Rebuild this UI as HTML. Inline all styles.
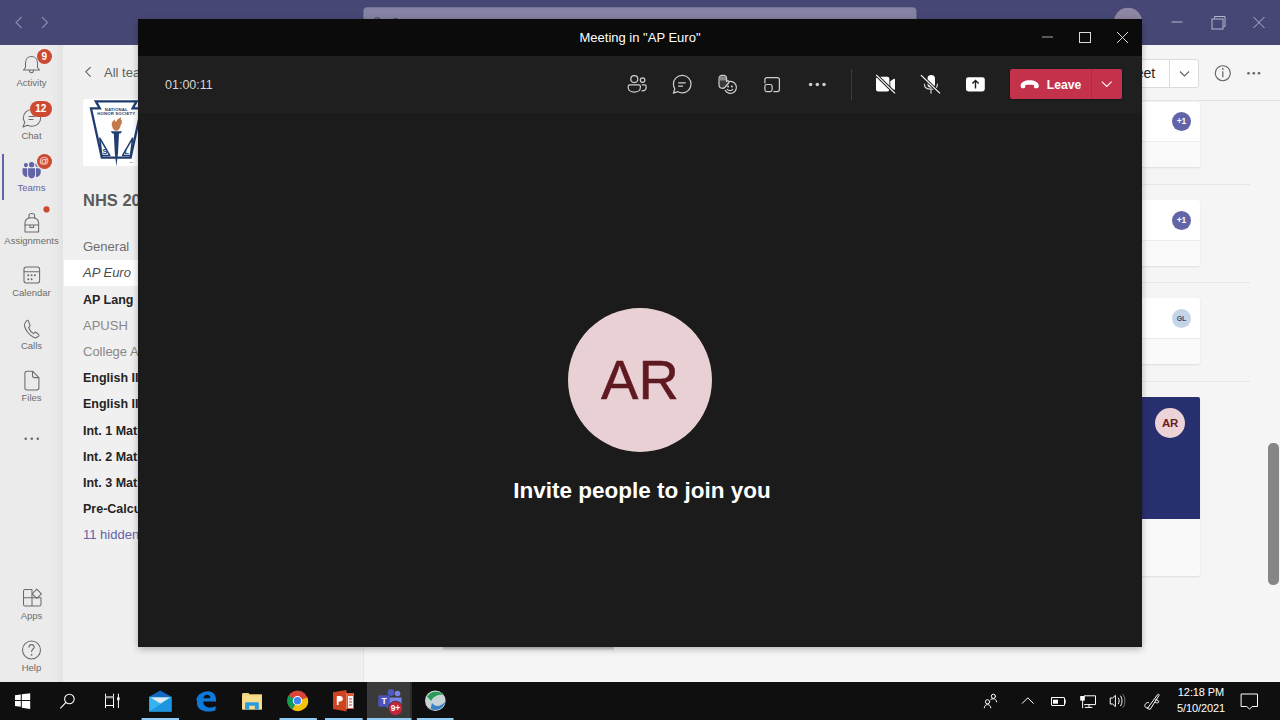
<!DOCTYPE html>
<html><head><meta charset="utf-8">
<style>
*{box-sizing:border-box;margin:0;padding:0}
html,body{width:1280px;height:720px;overflow:hidden;background:#f5f5f5;font-family:"Liberation Sans",sans-serif;position:relative}
.a{position:absolute}
svg{position:absolute;overflow:visible}
#topbar{left:0;top:0;width:1280px;height:45px;background:#464775}
#rail{left:0;top:45px;width:63px;height:637px;background:linear-gradient(to right,#ebebeb 0,#ebebeb 52px,#e3e3e3 63px)}
#chan{left:63px;top:45px;width:300px;height:637px;background:#f0f0f0}
#main{left:363px;top:45px;width:917px;height:637px;background:#f5f5f5}
#taskbar{left:0;top:682px;width:1280px;height:38px;background:#0f0f0f}
.rl{position:absolute;left:0;width:63px;text-align:center;font-size:9.5px;color:#6b6b6b;line-height:12px}
.ch{position:absolute;left:83px;font-size:13px;color:#616161;line-height:16px;white-space:nowrap}
.chb{font-weight:bold;color:#252424;font-size:12.5px}
.badge{position:absolute;border-radius:8px;background:#cc4a31;color:#fff;font-size:10px;font-weight:bold;text-align:center}
#mw{left:138px;top:19px;width:1004px;height:628px;background:#1b1b1b;box-shadow:0 2px 7px rgba(0,0,0,.28)}
.card{position:absolute;background:#fff;border-radius:3px;box-shadow:0 1px 2px rgba(0,0,0,.1)}
.cardf{position:absolute;background:#fafafa;border-top:1px solid #ececec;border-radius:0 0 3px 3px}
.av{position:absolute;width:19px;height:19px;border-radius:50%;font-size:8.5px;font-weight:bold;text-align:center;line-height:19px}
</style></head><body>
<div id="topbar" class="a"></div>
<svg width="1280" height="45" style="left:0;top:0">
  <g stroke="#8b8cb0" stroke-width="1.1" fill="none">
    <path d="M21.5 17 L16 22.5 L21.5 28"/><path d="M42 17 L47.5 22.5 L42 28"/>
  </g>
  <rect x="363.4" y="7.2" width="553" height="28" rx="4" fill="#8583a3"/>
  <circle cx="377.2" cy="22" r="4.3" stroke="#3d3c63" stroke-width="1" fill="none"/>
  <rect x="393.5" y="18" width="4" height="2" fill="#3d3c63" opacity="0.7"/>
  <circle cx="1128" cy="22" r="14.2" fill="#8e86a3"/>
  <g stroke="#b6b7cf" stroke-width="1" fill="none">
    <path d="M1171.5 22 H1182.5"/>
    <rect x="1212" y="19" width="11" height="10"/><path d="M1214.5 18.5 V16.5 H1225 V26.5 H1223.5"/>
    <path d="M1253.5 17 L1264.5 28 M1264.5 17 L1253.5 28"/>
  </g>
</svg>
<div id="main" class="a"></div>
<div class="a" style="left:363px;top:45px;width:1px;height:637px;background:#e6e6e6"></div>
<div class="a" style="left:363px;top:100px;width:917px;height:1px;background:#e3e3e3"></div>
<div class="a" style="left:1083px;top:58.5px;width:116px;height:29.5px;background:#fff;border:1px solid #dcdcdc;border-radius:3px"></div>
<div class="a" style="left:1168.5px;top:58.5px;width:1px;height:29.5px;background:#dcdcdc"></div>
<div class="a" style="left:1124px;top:65px;font-size:14px;color:#252424;line-height:16px">Meet</div>
<svg width="1280" height="120" style="left:0;top:0">
  <path d="M1180 71.5 L1184.5 76 L1189 71.5" stroke="#616161" stroke-width="1.1" fill="none"/>
  <circle cx="1222.8" cy="73.2" r="7.5" stroke="#616161" stroke-width="1.1" fill="none"/>
  <path d="M1222.8 71.2 V77.2" stroke="#616161" stroke-width="1.2"/><circle cx="1222.8" cy="68.9" r="0.9" fill="#616161"/>
  <circle cx="1248.5" cy="73.2" r="1.3" fill="#616161"/><circle cx="1253.8" cy="73.2" r="1.3" fill="#616161"/><circle cx="1259" cy="73.2" r="1.3" fill="#616161"/>
</svg>
<div class="a" style="left:700px;top:184px;width:550px;height:1px;background:#e6e6e6"></div>
<div class="a" style="left:700px;top:282px;width:550px;height:1px;background:#e6e6e6"></div>
<div class="a" style="left:700px;top:380.5px;width:550px;height:1px;background:#e6e6e6"></div>
<div class="card" style="left:443px;top:102px;width:757px;height:65px"></div>
<div class="cardf" style="left:443px;top:141px;width:757px;height:26px"></div>
<div class="card" style="left:443px;top:200px;width:757px;height:65.5px"></div>
<div class="cardf" style="left:443px;top:239.5px;width:757px;height:26px"></div>
<div class="card" style="left:443px;top:298px;width:757px;height:65.5px"></div>
<div class="cardf" style="left:443px;top:337.5px;width:757px;height:26px"></div>
<div class="card" style="left:443px;top:397px;width:757px;height:179px;overflow:hidden;background:#f9f9f9;border-radius:2px"><div class="a" style="left:0;top:0;width:757px;height:122px;background:#29306f"></div></div>
<div class="av" style="left:1172px;top:112.3px;background:#6264a7;color:#fff">+1</div>
<div class="av" style="left:1172px;top:210.5px;background:#6264a7;color:#fff">+1</div>
<div class="av" style="left:1172px;top:308.5px;background:#c5d5e8;color:#3b4a6b;font-size:7px">GL</div>
<div class="a" style="left:1155px;top:408px;width:30px;height:30px;border-radius:50%;background:#ecd3d6;color:#6a1c26;font-size:11.5px;font-weight:bold;text-align:center;line-height:30px;letter-spacing:-0.2px">AR</div>
<div class="a" style="left:1267.8px;top:443.3px;width:11.2px;height:142px;border-radius:5px;background:#868686"></div>
<div id="chan" class="a"></div>
<svg width="300" height="682" style="left:0;top:0">
  <path d="M90.3 67.3 L85.8 71.8 L90.3 76.3" stroke="#616161" stroke-width="1.1" fill="none" stroke-linecap="round"/>
</svg>
<div class="ch" style="left:104px;top:65px;font-size:13px;color:#616161">All teams</div>
<div class="a" style="left:83px;top:99px;width:70px;height:67px;background:#fff;border-radius:3px"></div>
<svg width="300" height="300" style="left:0;top:0">
  <path d="M95.8 101.4 H136.6 L132.6 108.4 H141.4 L130.6 157.6 H101.8 L91 108.4 H99.8 Z" fill="#fff" stroke="#1f3d70" stroke-width="2.3" stroke-linejoin="miter"/>
  <text x="116.2" y="110.8" font-size="4.3" font-weight="bold" fill="#1f3d70" text-anchor="middle" font-family="Liberation Sans" letter-spacing="0.15">NATIONAL</text>
  <text x="116.2" y="115.3" font-size="4.3" font-weight="bold" fill="#1f3d70" text-anchor="middle" font-family="Liberation Sans" letter-spacing="0.15">HONOR SOCIETY</text>
  <path d="M112.2 126.5 C111 123.5 112.5 120.8 115 119.2 C114.6 121.2 115.6 122 116.6 121.2 C117.2 119.2 119.2 117.6 121.6 117.2 C120.2 118.6 120.8 119.8 122 120.4 C121.4 121.2 121.6 122.4 122.2 123 C121.2 123.6 120.8 125 120.4 126.4 C119.6 129 118.2 130.6 116.2 130.8 C114.2 130.8 112.8 129 112.2 126.5 Z" fill="#c5794a"/>
  <path d="M110.8 131.2 H122 L120.6 133.6 H119 L118 153 L116.4 166.2 L114.8 153 L113.8 133.6 H112.2 Z" fill="#1f3d70"/>
  <path d="M99.8 138.2 L101.8 155.4 H109.8 Z" fill="none" stroke="#1f3d70" stroke-width="1.5" stroke-linejoin="round"/>
  <path d="M132.6 138.2 L130.6 155.4 H122.6 Z" fill="none" stroke="#1f3d70" stroke-width="1.5" stroke-linejoin="round"/>
  <text x="102.6" y="154.4" font-size="7.5" font-weight="bold" fill="#1f3d70" font-family="Liberation Sans">S</text>
  <text x="124.6" y="154.4" font-size="7.5" font-weight="bold" fill="#1f3d70" font-family="Liberation Sans">L</text>
  <text x="129.5" y="163" font-size="2.5" fill="#1f3d70" font-family="Liberation Sans">TM</text>
</svg>
<div class="ch chb" style="top:190px;font-size:16.5px;line-height:20px;color:#5b5b5b">NHS 2020-2021</div>
<div class="a" style="left:64px;top:260px;width:299px;height:26px;background:#fff"></div>
<div class="ch" style="top:239.2px;color:#6e6e6e">General</div>
<div class="ch" style="top:265.4px;font-style:italic;color:#4a4a4a">AP Euro</div>
<div class="ch chb" style="top:291.6px">AP Lang</div>
<div class="ch" style="top:317.8px;color:#8a8886">APUSH</div>
<div class="ch" style="top:344.0px;color:#8a8886">College Apps</div>
<div class="ch chb" style="top:370.2px">English III</div>
<div class="ch chb" style="top:396.4px">English III</div>
<div class="ch chb" style="top:422.6px">Int. 1 Math</div>
<div class="ch chb" style="top:448.8px">Int. 2 Math</div>
<div class="ch chb" style="top:475.0px">Int. 3 Math</div>
<div class="ch chb" style="top:501.2px">Pre-Calculus</div>
<div class="ch" style="top:527.4px;color:#6264a7">11 hidden teams</div>
<div id="rail" class="a">
  <div class="a" style="left:2px;top:109px;width:2px;height:46px;background:#6264a7"></div>
</div>
<svg width="63" height="682" style="left:0;top:0">
  <g stroke="#6b6b6b" stroke-width="1.05" fill="none" stroke-linecap="round" stroke-linejoin="round">
    <!-- bell -->
    <path d="M25.5 67.5 V63 C25.5 59 28 56.5 31.5 56.5 C35 56.5 37.5 59 37.5 63 V67.5 L39.5 70 H23.5 Z"/>
    <path d="M29.5 70.3 C29.5 72 30.5 72.8 31.5 72.8 C32.5 72.8 33.5 72 33.5 70.3"/>
    <!-- chat -->
    <path d="M23 127 L24.8 122.3 C23.8 120.8 23.3 119.5 23.3 118 C23.3 113 27.3 109.5 32 109.5 C36.8 109.5 40.7 113 40.7 118 C40.7 122.8 36.8 126.3 32 126.3 C30.3 126.3 28.8 126 27.5 125.3 Z"/>
    <path d="M29 116.5 H34.5 M29 119.5 H33"/>
    <!-- backpack -->
    <path d="M25 232 V223 C25 219.5 27.8 217.7 31.8 217.7 C35.8 217.7 38.6 219.5 38.6 223 V232 Z"/>
    <path d="M29 218 V215.5 C29 214.2 30 213.5 31.8 213.5 C33.6 213.5 34.6 214.2 34.6 215.5 V218"/>
    <path d="M25 225 H38.6 M30 225 V227.5 H33.6 V225"/>
    <!-- calendar -->
    <rect x="24" y="267" width="15.6" height="16" rx="2.2"/><path d="M24 271.8 H39.6"/>
    <!-- calls -->
    <path d="M26.8 320.5 C25 322.5 24 324 24.5 326 C25.5 330 29.5 335.5 34 337.5 C35.8 338.3 37.2 337.8 38.7 336.2 C39.2 335.6 39.1 334.8 38.5 334.3 L36.3 332.5 C35.8 332.1 35 332.1 34.5 332.6 L33.6 333.6 C31.3 332.3 29.5 330 28.5 327.5 L29.6 326.6 C30.1 326.1 30.2 325.3 29.8 324.8 L28.4 320.8 C28 320 27.3 320 26.8 320.5 Z"/>
    <!-- files -->
    <path d="M32.5 371.2 H27 C25.8 371.2 24.9 372.1 24.9 373.3 V387.8 C24.9 389 25.8 389.9 27 389.9 H36.8 C38 389.9 38.9 389 38.9 387.8 V377.6 Z M32.5 371.2 V375.5 C32.5 376.7 33.4 377.6 34.6 377.6 H38.9"/>
    <!-- apps -->
    <path d="M25.2 589.5 H32 V606 H25.2 C24.2 606 23.5 605.3 23.5 604.3 V591.2 C23.5 590.2 24.2 589.5 25.2 589.5 Z M23.5 597.8 H32 M32 597.8 H41 V604.3 C41 605.3 40.3 606 39.3 606 H32"/>
    <path d="M36.8 589.2 L41.4 593.8 L36.8 598.4 L32.2 593.8 Z"/>
    <!-- help -->
    <circle cx="31.5" cy="650" r="9"/>
    <path d="M29 647.2 C29 645.6 30.1 644.6 31.6 644.6 C33.1 644.6 34.2 645.6 34.2 647 C34.2 649 31.6 649.1 31.6 651.8"/>
  </g>
  <g fill="#6b6b6b">
    <circle cx="28.3" cy="275.2" r="1"/><circle cx="31.6" cy="275.2" r="1"/><circle cx="34.9" cy="275.2" r="1"/>
    <circle cx="28.3" cy="279.2" r="1"/><circle cx="31.6" cy="279.2" r="1"/>
    <circle cx="31.6" cy="654.8" r="0.9"/>
    <circle cx="25.7" cy="438.8" r="1.3"/><circle cx="31.8" cy="438.8" r="1.3"/><circle cx="37.8" cy="438.8" r="1.3"/>
  </g>
  <!-- teams icon -->
  <g fill="#6264a7">
    <circle cx="25.9" cy="165.1" r="2.1"/><circle cx="37.3" cy="165.1" r="2.1"/><circle cx="31.6" cy="164.7" r="2.6"/>
    <path d="M22.5 168.3 H27.2 V177 C24.6 177 22.5 175.2 22.5 172.5 Z"/>
    <path d="M36 168.3 H40.7 V172.5 C40.7 175.2 38.6 177 36 177 Z"/>
    <path d="M28.1 168.3 H35.1 V174.5 C35.1 176.7 33.6 178.4 31.6 178.4 C29.6 178.4 28.1 176.7 28.1 174.5 Z"/>
  </g>
  <circle cx="46.5" cy="209.4" r="3.1" fill="#cc4a31"/>
</svg>
<div class="rl" style="top:77px">Activity</div>
<div class="rl" style="top:129.5px">Chat</div>
<div class="rl" style="top:182px;color:#6264a7">Teams</div>
<div class="rl" style="top:234.5px">Assignments</div>
<div class="rl" style="top:287px">Calendar</div>
<div class="rl" style="top:339.5px">Calls</div>
<div class="rl" style="top:392px">Files</div>
<div class="rl" style="top:610px">Apps</div>
<div class="rl" style="top:662px">Help</div>
<div class="badge" style="left:37px;top:49.3px;width:14.8px;height:14.8px;line-height:15px">9</div>
<div class="badge" style="left:29.8px;top:101.1px;width:22px;height:15.6px;line-height:16px">12</div>
<div class="badge" style="left:36.6px;top:153.8px;width:15px;height:15px;line-height:14px;font-size:9.5px;font-weight:normal;box-shadow:0 0 0 1.2px #ebebeb">@</div>
<div id="taskbar" class="a"></div>
<div class="a" style="left:366.5px;top:682px;width:45px;height:38px;background:#3a3a3a"></div>
<div class="a" style="left:409.5px;top:682px;width:2px;height:36px;background:#2c2c2c"></div>
<div class="a" style="left:443px;top:647px;width:171px;height:4px;background:linear-gradient(rgba(0,0,0,.22),rgba(0,0,0,0))"></div>
<svg width="1280" height="720" style="left:0;top:0">
  <g fill="#fff">
    <path d="M15 695.2 L20.8 694.4 V700 H15 Z M21.8 694.3 L30.2 693.2 V700 H21.8 Z M15 701 H20.8 V706.7 L15 706 Z M21.8 701 H30.2 V708.9 L21.8 707.8 Z"/>
  </g>
  <g stroke="#fff" stroke-width="1.1" fill="none">
    <circle cx="69.4" cy="699" r="4.8"/><path d="M66 702.4 L60.3 708.3"/>
  </g>
  <g stroke="#fff" stroke-width="1" fill="none">
    <path d="M105.5 693.7 V708 M113.5 693.7 V708 M105.5 705.5 H113.5 M118.4 693.7 V708"/>
  </g>
  <rect x="105.5" y="696" width="8" height="2.3" fill="#9a9a9a"/>
  <ellipse cx="118.4" cy="698.8" rx="1.3" ry="2" fill="#fff"/>
  <!-- mail -->
  <path d="M149.1 696.8 L160.3 690.6 L171.5 696.8 Z" fill="#1167c4"/>
  <rect x="149.1" y="696.7" width="22.4" height="14.9" fill="#36b4f0"/>
  <path d="M171.5 697.5 V711.6 H149.1 Z" fill="#1e95e0"/>
  <path d="M150.8 697.6 H169.8 L160.3 703.4 Z" fill="#e6e9ee"/>
  <!-- edge -->
  <path d="M197 703.5 C197 696 201.5 691.2 208 691.2 C213.4 691.2 216 695.4 216 699.6 V701.6 H203.2 C203.2 705.4 206 707.6 209.6 707.6 C211.8 707.6 213.8 707 215.6 706 V710.2 C213.6 711.2 211.4 711.6 208.8 711.6 C202 711.6 197 708.4 197 703.5 Z M203.4 698.2 H210.4 C210.4 696 209 694.8 207 694.8 C205.2 694.8 203.8 696 203.4 698.2 Z" fill="#0f79d9"/>
  <path d="M196.8 700.6 C197.6 696.6 200.2 693.6 204.2 693" stroke="#0f79d9" stroke-width="1.6" fill="none"/>
  <!-- explorer -->
  <path d="M242.1 694.3 C242.1 693.6 242.6 693.1 243.3 693.1 H248.4 L249.6 694.2 H261.9 V709.4 H242.1 Z" fill="#f2cf6b"/>
  <path d="M242.1 695.2 H261.9 V709.4 H242.1 Z" fill="#f8dd8c"/>
  <path d="M243.2 693.9 H248.4" stroke="#bfe0c0" stroke-width="0.8"/>
  <path d="M245.1 709.4 V703.2 C245.1 702.7 245.5 702.3 246 702.3 H257.9 C258.4 702.3 258.8 702.7 258.8 703.2 V709.4 H254.8 V705.8 H249.2 V709.4 Z" fill="#2b9be2"/>
  <!-- chrome -->
  <circle cx="297.5" cy="700.7" r="10.3" fill="#db4437"/>
  <path d="M297.5 700.7 L288.6 695.5 A10.3 10.3 0 0 0 292.4 709.6 Z" fill="#0f9d58"/>
  <path d="M297.5 700.7 L292.4 709.6 A10.3 10.3 0 0 0 307.5 697.4 Z" fill="#f4c20d"/>
  <circle cx="297.5" cy="700.7" r="4.7" fill="#fff"/><circle cx="297.5" cy="700.7" r="3.7" fill="#4285f4"/>
  <!-- powerpoint -->
  <rect x="342" y="693" width="12" height="16" fill="#f3f3f3"/>
  <path d="M333 692.3 L346.5 690 V711.4 L333 709 Z" fill="#cf4420"/>
  <path d="M346.5 693 H354 V709 H346.5 Z" fill="#e05a34"/>
  <path d="M348 696 H353 V708 H348 Z" fill="#f7f7f7"/>
  <path d="M336.8 705 V696 H339.8 C341.8 696 342.8 697 342.8 698.8 C342.8 700.6 341.8 701.6 339.8 701.6 H338.6 V705 Z" fill="#fff"/>
  <path d="M349 699 H352 M349 702 H352 M349 705 H352" stroke="#cf4420" stroke-width="1"/>
  <!-- teams -->
  <circle cx="397.5" cy="693.5" r="2.8" fill="#7b83eb"/><circle cx="391" cy="692.6" r="3.3" fill="#5059c9"/>
  <path d="M386.5 697.5 H401.5 V704.5 C401.5 708 398.5 710.5 394 710.5 C389.5 710.5 386.5 708 386.5 704.5 Z" fill="#7b83eb"/>
  <rect x="378.3" y="695.2" width="11.5" height="11.5" rx="1" fill="#4b53bc"/>
  <text x="384" y="704.4" font-size="8.5" font-weight="bold" fill="#fff" text-anchor="middle" font-family="Liberation Sans">T</text>
  <circle cx="395.5" cy="708.4" r="7.2" fill="#c1273c" stroke="#3a3a3a" stroke-width="1"/>
  <text x="395.5" y="711.4" font-size="8.5" font-weight="bold" fill="#fff" text-anchor="middle" font-family="Liberation Sans">9+</text>
  <!-- globe app -->
  <circle cx="435.3" cy="700.7" r="10.3" fill="#c9d3d6"/>
  <path d="M427 697 C430 691 439 690 444 695 C440 694 434 695 431 701 C430 699.5 428.5 698 427 697 Z" fill="#2a9a58"/>
  <path d="M432 703 C436 708 441 706 445 702 C444 708 437 712 430.5 709 C431 707 431.5 705 432 703 Z" fill="#3b82c6"/>
  <g fill="#8ecbf5">
    <rect x="141.6" y="718" width="37.4" height="2"/><rect x="279.5" y="718" width="37.4" height="2"/>
    <rect x="325" y="718" width="37.7" height="2"/><rect x="367" y="718" width="44.4" height="2"/>
    <rect x="416.9" y="718" width="36.6" height="2"/>
  </g>
  <!-- tray -->
  <g stroke="#fff" stroke-width="1" fill="none" stroke-linecap="round">
    <circle cx="987.5" cy="701.8" r="2.1"/><path d="M984.3 707.8 C984.5 705.6 985.8 704.6 987.5 704.6 C989.2 704.6 990.6 705.6 990.8 707.8"/>
    <circle cx="993.4" cy="696.3" r="2.1"/><path d="M990.8 699.4 C991.4 699 992.3 698.8 993.4 698.8 C995.2 698.8 996.4 700 996.6 701.8"/>
    <path d="M1022 703.6 L1027.8 697.8 L1033.6 703.6" stroke-linecap="butt"/>
    <rect x="1051.5" y="697.5" width="13" height="8" rx="0.5"/><path d="M1065.2 699.8 V703.2"/>
    <path d="M1084.5 695.8 H1095.5 V704.6 H1084.5 M1082.6 700.5 V707.8 M1089 704.6 V707.4 M1085.2 707.4 H1092"/>
    <path d="M1110.6 698 H1112.6 L1115.4 695.4 V706.6 L1112.6 704 H1110.6 Z" stroke-linejoin="round"/>
    <path d="M1118.4 698 C1119.5 699.6 1119.5 702.2 1118.4 703.8 M1120.6 696 C1122.5 698.6 1122.5 703.2 1120.6 705.8"/>
    <path d="M1123 694.3 C1125.6 697.8 1125.6 704 1123 707.5" stroke="#777"/>
    <path d="M1148 707.5 C1145.5 708.8 1143.5 706 1145.8 703.5 C1146.6 702.7 1147.6 702.5 1148.4 702.6"/>
    <path d="M1147.6 708.2 L1157.6 694.6 C1158.2 693.8 1159.4 694.4 1159 695.4 L1150.4 709 Z" stroke-linejoin="round"/>
    <path d="M1155.4 700 C1157.6 699.6 1159.2 700.6 1158.6 702.2 C1158.2 703 1157 703 1155.6 702.6"/>
    <path d="M1241.5 694 H1257.5 V706.5 H1252.3 L1249.5 709 L1246.7 706.5 H1241.5 Z" stroke-linejoin="miter"/>
  </g>
  <rect x="1053" y="699.7" width="5" height="4" fill="#fff"/>
  <rect x="1080.2" y="696" width="4.6" height="4.6" fill="#fff"/>
</svg>
<div class="a" style="left:1170px;top:684.3px;width:62px;text-align:center;color:#fff;font-size:11px;line-height:16px;letter-spacing:-0.1px">12:18 PM<br>5/10/2021</div>
<div id="mw" class="a"></div>
<div class="a" style="left:138px;top:19px;width:1004px;height:36.5px;background:#0b0b0b"></div>
<div class="a" style="left:138px;top:55.5px;width:1004px;height:57px;background:#201f1f"></div>
<div class="a" style="left:138px;top:30px;width:1004px;text-align:center;color:#fff;font-size:13px;line-height:16px">Meeting in "AP Euro"</div>
<div class="a" style="left:165px;top:78px;color:#d6d6d6;font-size:12.5px;line-height:15px">01:00:11</div>
<div class="a" style="left:851px;top:69px;width:1px;height:31px;background:#3d3c3b"></div>
<svg width="1280" height="720" style="left:0;top:0">
  <g stroke="#dadada" stroke-width="1" fill="none">
    <path d="M1042 37 H1053" stroke="#a8a8a8"/>
    <rect x="1079.5" y="32.5" width="11" height="10"/>
    <path d="M1117 32 L1128 43 M1128 32 L1117 43"/>
  </g>
  <g stroke="#cfcfcf" stroke-width="1.2" fill="none" stroke-linecap="round" stroke-linejoin="round">
    <!-- people -->
    <circle cx="634.3" cy="79.1" r="3.5"/><circle cx="642.6" cy="80.1" r="2.3"/>
    <path d="M629.8 84.8 H638.8 C639.8 84.8 640.4 85.4 640.4 86.4 V87.2 C640.4 90.2 637.8 92.1 634.3 92.1 C630.8 92.1 628.2 90.2 628.2 87.2 V86.4 C628.2 85.4 628.8 84.8 629.8 84.8 Z"/>
    <path d="M642.2 84.8 H644.6 C645.6 84.8 646.2 85.4 646.2 86.4 V87.3 C646.2 89.5 644.6 90.9 642 90.9"/>
    <!-- chat -->
    <path d="M673.4 93.2 L674.8 88.8 C673.9 87.4 673.4 85.8 673.4 84.1 C673.4 79.2 677.3 75.3 682.2 75.3 C687.1 75.3 691 79.2 691 84.1 C691 89 687.1 92.9 682.2 92.9 C680.5 92.9 678.9 92.4 677.6 91.6 Z"/>
    <path d="M678.6 82.8 H685.4 M678.6 86.1 H682.6"/>
    <!-- smiley -->
    <path d="M728.4 81.7 A6 6 0 1 1 725.2 90.4"/>
    <path d="M727.2 89.4 C728.5 90.9 731.5 90.9 732.8 89.4"/>
    <!-- tray -->
    <path d="M764.9 83 V79.6 C764.9 78.4 765.9 77.6 767.1 77.6 H777.3 C778.5 77.6 779.4 78.4 779.4 79.6 V89.6 C779.4 90.9 778.5 91.6 777.3 91.6 H773.8"/>
    <rect x="764.9" y="84.5" width="7.2" height="7.1" rx="1.8"/>
  </g>
  <!-- hand -->
  <path d="M719 84.5 V78.8 C719 76.8 720.4 75.4 722.4 75.4 H723.4 C725.4 75.4 726.6 76.8 726.6 78.8 V81.6 L727.2 81.1 C727.9 80.6 728.8 80.9 729 81.6 C729.1 82.1 729 82.5 728.6 83 L725.2 87 C724.4 87.9 723.5 88.3 722.4 88.3 C720.4 88.3 719 86.7 719 84.5 Z" fill="#3a3a3a" stroke="#cfcfcf" stroke-width="1.2" stroke-linejoin="round"/>
  <path d="M719.6 76.5 H726 V80.5 H719.6 Z" fill="#8a8a8a"/>
  <g fill="#cfcfcf">
    <circle cx="728.1" cy="86.6" r="1"/><circle cx="731.9" cy="86.6" r="1"/>
    <circle cx="810.6" cy="84.4" r="1.75"/><circle cx="817.3" cy="84.4" r="1.75"/><circle cx="824" cy="84.4" r="1.75"/>
  </g>
  <g fill="#fff">
    <rect x="876" y="76.8" width="13.4" height="14.6" rx="2.2"/>
    <path d="M890.3 81.3 L893.6 78.9 C894.3 78.4 895 78.8 895 79.6 V88.9 C895 89.7 894.3 90.1 893.6 89.6 L890.3 87.3 Z"/>
    <rect x="966" y="77.2" width="18.8" height="14.2" rx="2.4"/>
    <rect x="927.5" y="74.9" width="7.5" height="12.9" rx="3.75"/>
  </g>
  <path d="M876.2 74.9 L895 93.4" stroke="#201f1f" stroke-width="3.2"/>
  <path d="M876.2 74.9 L895 93.4" stroke="#fff" stroke-width="1.2"/>
  <path d="M975.5 88.5 V80.8 M972.3 83.6 L975.5 80.4 L978.7 83.6" stroke="#201f1f" stroke-width="1.4" fill="none"/>
  <g stroke="#cfcfcf" stroke-width="1.2" fill="none" stroke-linecap="round">
    <path d="M924.4 84.2 C924.4 87.2 927 89.2 931.2 89.2 C935.4 89.2 937.4 87.2 937.4 84.2"/>
    <path d="M931 89.2 V93.2"/>
  </g>
  <path d="M920.9 75.1 L940 93.4" stroke="#201f1f" stroke-width="3"/>
  <path d="M920.9 75.1 L940 93.4" stroke="#fff" stroke-width="1.2"/>
</svg>
<div class="a" style="left:1010.2px;top:69.4px;width:111.5px;height:29.8px;background:#c4314b;border-radius:2px;box-shadow:0 1px 2px rgba(0,0,0,.3)"></div>
<div class="a" style="left:1091px;top:69.4px;width:1px;height:29.8px;background:#ad2a42"></div>
<div class="a" style="left:1046.8px;top:78px;color:#fff;font-size:12.2px;font-weight:bold;line-height:15px">Leave</div>
<svg width="1280" height="720" style="left:0;top:0">
  <path d="M1020.6 85.8 C1020.6 82 1025 80.2 1029.6 80.2 C1034.2 80.2 1038.8 82 1038.8 85.8 C1038.8 87.3 1038.2 88.2 1037 88.2 H1035.4 C1034.4 88.2 1033.9 87.6 1033.9 86.6 V85 C1032.6 84.5 1026.6 84.5 1025.3 85 V86.6 C1025.3 87.6 1024.8 88.2 1023.8 88.2 H1022.2 C1021.2 88.2 1020.6 87.3 1020.6 85.8 Z" fill="#fff"/>
  <path d="M1101.8 81.6 L1106.7 86.5 L1111.6 81.6" stroke="#fff" stroke-width="1.1" fill="none"/>
</svg>
<div class="a" style="left:568px;top:307.5px;width:144px;height:144px;border-radius:50%;background:#e9d0d4;color:#5e1a20;font-size:56px;text-align:center;line-height:144px;-webkit-text-stroke:0.5px #5e1a20">AR</div>
<div class="a" style="left:138px;top:478px;width:1004px;text-align:center;color:#fff;font-size:22.5px;font-weight:bold;line-height:26px;padding-left:4px">Invite people to join you</div>
</body></html>
